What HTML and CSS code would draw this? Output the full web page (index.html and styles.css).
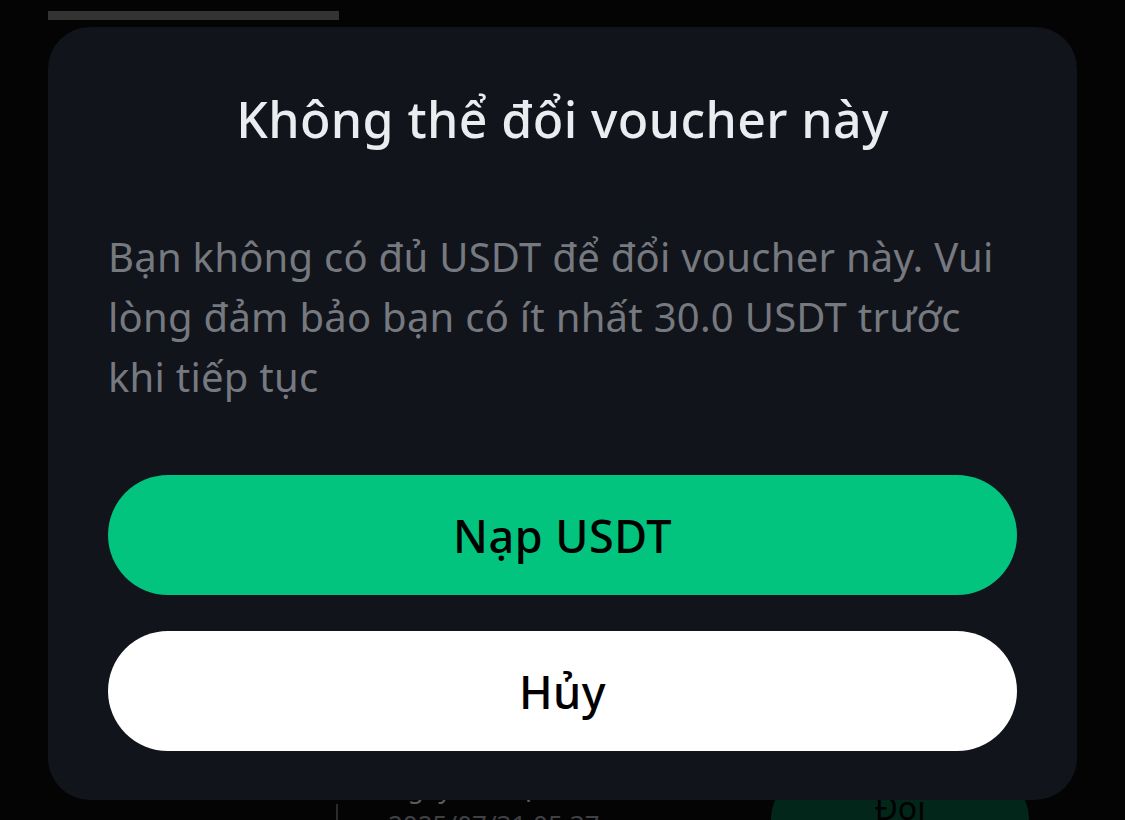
FILE: index.html
```html
<!DOCTYPE html>
<html lang="vi">
<head>
<meta charset="utf-8">
<link rel="stylesheet" href="styles.css">
</head>
<body>
<div class="page">
  <div class="topbar"></div>
  <div class="under">
    <div class="under-left">
      <div class="divider"></div>
      <div class="under-text">
        <div class="under-label">Ngày hết hạn</div>
        <div class="under-date">2025/07/31 05:37</div>
      </div>
    </div>
    <div class="under-btn">Đổi</div>
  </div>
  <div class="modal">
    <h1 class="title">Không thể đổi voucher này</h1>
    <p class="body">Bạn không có đủ USDT để đổi voucher này. Vui lòng đảm bảo bạn có ít nhất 30.0 USDT trước khi tiếp tục</p>
    <div class="actions">
      <button class="btn btn-primary">Nạp USDT</button>
      <button class="btn btn-secondary">Hủy</button>
    </div>
  </div>
</div>
</body>
</html>
```
FILE: styles.css
```css
html, body {
  margin: 0;
  padding: 0;
  background: #040405;
}
body {
  width: 1125px;
  height: 820px;
  overflow: hidden;
  font-family: "Noto Sans", "Open Sans", sans-serif;
}
.page {
  position: relative;
  width: 1125px;
  height: 820px;
  overflow: hidden;
}
.topbar {
  position: absolute;
  left: 48px;
  top: 11px;
  width: 291px;
  height: 9px;
  background: #333333;
}
.under {
  position: absolute;
  left: 0;
  top: 770px;
  width: 1125px;
  display: flex;
  justify-content: space-between;
  align-items: flex-start;
}
.under-left {
  display: flex;
  margin-left: 336px;
  gap: 50px;
}
.divider {
  width: 2px;
  height: 60px;
  margin-top: 34px;
  background: #2a2b2e;
}
.under-text {
  display: flex;
  flex-direction: column;
  color: #5b5d61;
  font-size: 26px;
  line-height: 36px;
}
.under-date {
  color: #3f4144;
}
.under-btn {
  margin-right: 96px;
  margin-top: 8px;
  width: 258px;
  height: 80px;
  border-radius: 40px;
  background: #02261a;
  color: #000;
  font-size: 32px;
  text-align: center;
  line-height: 60px;
}
.modal {
  position: absolute;
  left: 48px;
  top: 27px;
  width: 1029px;
  height: 773px;
  box-sizing: border-box;
  padding: 62px 60px 48px;
  background: #11141b;
  border-radius: 42px;
  display: flex;
  flex-direction: column;
}
.title {
  margin: 0;
  font-size: 50px;
  letter-spacing: 0.4px;
  line-height: 60px;
  font-weight: 500;
  color: #eaecef;
  text-align: center;
}
.body {
  margin: 78px 0 0;
  font-size: 40px;
  letter-spacing: 0.25px;
  line-height: 60px;
  color: #76797f;
}
.actions {
  margin-top: 68px;
  display: flex;
  flex-direction: column;
  gap: 36px;
}
.btn {
  height: 120px;
  border: none;
  border-radius: 60px;
  font-family: inherit;
  font-size: 45px;
  letter-spacing: 0.5px;
  font-weight: 500;
  color: #000;
  padding: 0;
}
.btn-primary {
  background: #02c47f;
}
.btn-secondary {
  background: #ffffff;
}
```
